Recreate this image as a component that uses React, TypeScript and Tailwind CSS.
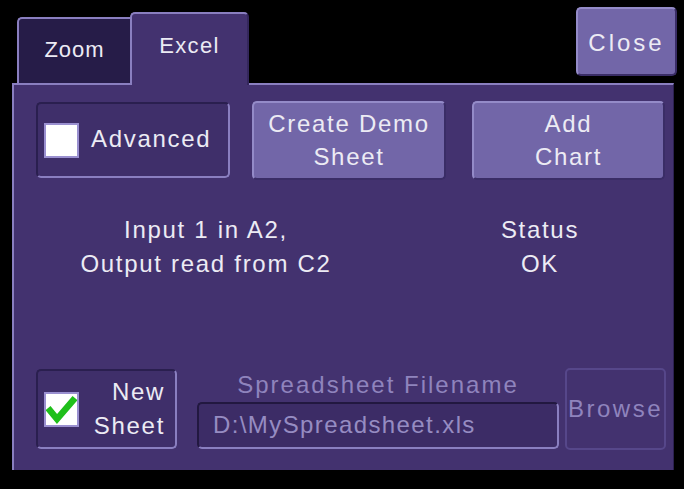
export default function App() {
  return (
    <div className="w-[684px] h-[489px] bg-black pt-[7px] pl-[12px] font-['Liberation_Sans',Arial,sans-serif] text-[24px] tracking-[1.7px] text-[#ecebf4] overflow-hidden">
      {/* tabs + close */}
      <div className="flex items-end h-[76px]">
        <div className="ml-[5px] w-[113px] h-[66px] flex items-center justify-center pb-[4px] bg-[#261c48] border-t-2 border-l-2 border-[#8a7fc0] rounded-tl-[5px] text-[22px] tracking-[1px]">
          Zoom
        </div>
        <div className="relative z-10 -mb-[2px] w-[119px] h-[73px] flex items-center justify-center pb-[8px] bg-[#43326f] border-t-2 border-l-2 border-r-2 border-t-[#8a7fc0] border-l-[#8a7fc0] border-r-[#34275c] rounded-t-[5px] text-[22px] tracking-[1.3px]">
          Excel
        </div>
        <button className="self-start ml-auto mr-[7px] w-[101px] h-[69px] flex items-center justify-center pt-[2px] bg-[#7266a8] border-2 border-t-[#948bc8] border-l-[#948bc8] border-b-[#3a2d66] border-r-[#3a2d66] rounded-[5px] tracking-[3px]">
          Close
        </button>
      </div>

      {/* panel */}
      <div className="w-[662px] h-[387px] bg-[#43326f] border-t-2 border-l-2 border-r border-t-[#8a7fc0] border-l-[#8a7fc0] border-r-[#2c2150] pt-[16px] pl-[22px]">
        {/* row 1 */}
        <div className="flex items-start">
          <div className="mt-[1px] w-[194px] h-[76px] flex items-center gap-[12px] pl-[6px] border-2 border-t-[#2a1f4f] border-l-[#2a1f4f] border-b-[#8a7fc0] border-r-[#8a7fc0] rounded-[5px] bg-[#3f2f6a]">
            <div className="w-[35px] h-[35px] bg-white border-2 border-[#9a90d0]" />
            <span className="pb-[2px]">Advanced</span>
          </div>
          <button className="ml-[22px] w-[194px] h-[79px] flex items-center justify-center text-center leading-[33px] pb-[2px] bg-[#7266a8] border-2 border-t-[#948bc8] border-l-[#948bc8] border-b-[#3a2d66] border-r-[#3a2d66] rounded-[5px]">
            Create Demo
            <br />
            Sheet
          </button>
          <button className="ml-[26px] w-[193px] h-[79px] flex items-center justify-center text-center leading-[33px] pb-[2px] bg-[#7266a8] border-2 border-t-[#948bc8] border-l-[#948bc8] border-b-[#3a2d66] border-r-[#3a2d66] rounded-[5px]">
            Add
            <br />
            Chart
          </button>
        </div>

        {/* row 2 */}
        <div className="flex mt-[33px] leading-[34px] text-center">
          <div className="w-[340px]">
            <div>Input 1 in A2,</div>
            <div>Output read from C2</div>
          </div>
          <div className="ml-[44px] w-[240px]">
            <div>Status</div>
            <div>OK</div>
          </div>
        </div>

        {/* row 3 */}
        <div className="flex items-start mt-[87px]">
          <div className="mt-[1px] w-[141px] h-[80px] flex items-center pl-[6px] border-2 border-t-[#2a1f4f] border-l-[#2a1f4f] border-b-[#8a7fc0] border-r-[#8a7fc0] rounded-[5px] bg-[#3f2f6a]">
            <div className="w-[35px] h-[35px] bg-white border-2 border-[#9a90d0] flex items-center justify-center">
              <svg width="31" height="31" viewBox="0 0 31 31">
                <path d="M2 14 L11 25 L29 4" fill="none" stroke="#1fbf1a" strokeWidth="6.5" strokeLinejoin="miter" />
              </svg>
            </div>
            <div className="flex-1 text-right pr-[10px] leading-[34px]">
              <div>New</div>
              <div>Sheet</div>
            </div>
          </div>
          <div className="ml-[20px] w-[362px] flex flex-col">
            <div className="text-center leading-[34px] text-[#8f84bd] tracking-[2px]">Spreadsheet Filename</div>
            <div className="h-[47px] flex items-center pl-[14px] pb-[2px] border-2 border-t-[#221840] border-l-[#221840] border-b-[#8a7fc0] border-r-[#8a7fc0] rounded-[5px] bg-[#3c2c66] text-[#968cc2] tracking-[1.4px]">
              D:\MySpreadsheet.xls
            </div>
          </div>
          <button className="ml-[6px] w-[101px] h-[82px] flex items-center justify-center border-2 border-[#56478a] rounded-[5px] text-[#8f84bd] tracking-[2.5px]">
            Browse
          </button>
        </div>
      </div>
    </div>
  );
}
